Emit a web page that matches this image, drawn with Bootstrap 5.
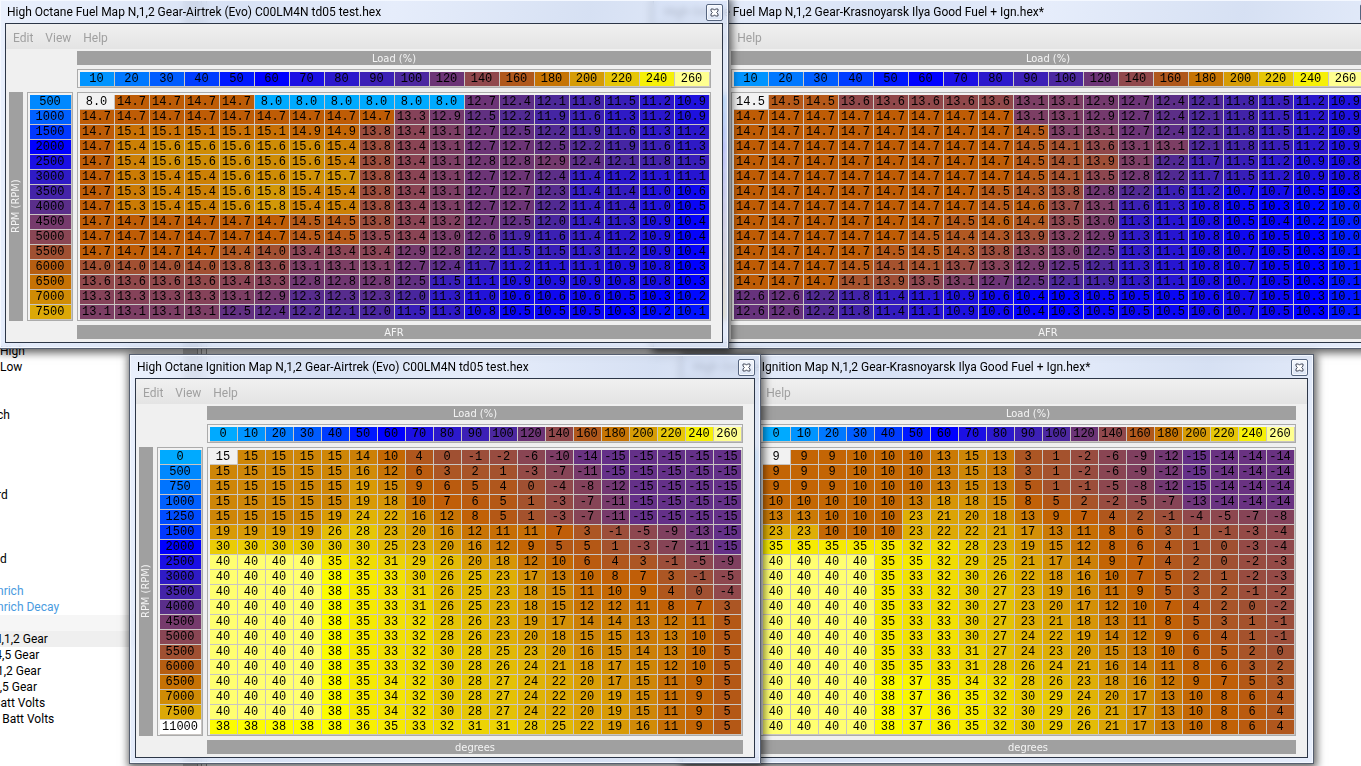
<!DOCTYPE html>
<html lang="en">
<head>
<meta charset="utf-8">
<meta name="viewport" content="width=device-width, initial-scale=1">
<title>Map editor</title>
<link href="https://cdn.jsdelivr.net/npm/bootstrap@5.3.0/dist/css/bootstrap.min.css" rel="stylesheet">
<style>
body { font: 12px/16px Roboto, "Open Sans", sans-serif; color: #000; background: #fff; }
.tree { width: 183px; padding-top: 343px; background: #fff; }
.tree li { height: 16px; white-space: nowrap; }
.tree a { color: #000; text-decoration: none; }
.tree .blue a { color: #4a9be0; }
.tree .clip a { margin-left: -3px; }
.tree .deep a { margin-left: -7px; }
.tree .group { background: #f6f6f6; }
.tree .active { background: #efefef; }
.splitter { width: 24px; background: #f0f0f0; border-left: 14px solid #c8c8c8; border-right: 1px solid #999; box-shadow: inset 1px 0 #999, inset 4px 0 #e4e4e4, inset 5px 0 #999; }

/* floating tool windows */
.win { position: absolute; width: max-content; border: 1px solid #565f70; padding: 0 5px 5px; background: linear-gradient(100deg, #e4ecfcc8, #cddaf2c8 30%, #dfe8fac8 50%, #cbd8f0c8 75%, #e0e9fbc8); backdrop-filter: blur(3px); box-shadow: inset 0 0 0 1px #f4f8ff, 1px 2px 8px 2px #0009; }
.fuel-a { left: -1px; top: -1px; z-index: 2; }
.fuel-b { left: 653px; top: -1px; z-index: 1; }
.ign-a { left: 129px; top: 354px; z-index: 2; }
.ign-b { left: 682px; top: 354px; z-index: 1; }
.caption-bar { height: 23px; padding-left: 2px; }
.fuel-b .caption-bar, .ign-b .caption-bar { padding-left: 5px; }
.caption-bar h2 { font-size: 12px; line-height: 24px; margin: 0; font-weight: 400; white-space: nowrap; }
.btn-x { width: 17px; height: 17px; border: 1px solid #56657f; border-radius: 2px; background: linear-gradient(#f4f7fd, #dce5f5); box-shadow: inset 0 0 0 1px #fffa; margin-top: 4px; }
.client { border: 1px solid #2c3647; background: #f0f0f0; }
.menubar { height: 25px; padding: 2px 7px 0; gap: 12px; background: linear-gradient(#f0f0f0, #e4e4e4); }
.menubar button { color: #a0a0a0; padding: 0; border: 0; background: none; }
.pane { display: grid; grid-template-columns: 14px auto auto; gap: 4px; padding: 2px 11px 3px 3px; }
.strip { background: #a0a0a0; color: #f4f4f4; font: 11px/15px "DejaVu Sans Condensed", "DejaVu Sans", sans-serif; text-align: center; grid-column: 3; height: 14px; }
.strip.side { writing-mode: vertical-rl; transform: rotate(180deg); grid-column: 1; height: auto; line-height: 14px; }
.box { border: 1px solid #ababab; padding: 2px 0 0 2px; background: #f2f2f2; }
.box.top-axis { grid-column: 3; }
.box table { border-collapse: separate; border-spacing: 0; table-layout: fixed; font: 12px/14px "Liberation Mono", monospace; color: #000; text-align: center; }
.box td, .box th { height: 15px; padding: 0 1px 0 0; border: solid #c9c5c2; border-width: 0 1px 1px 0; font-weight: 400; white-space: nowrap; }
.w35 td, .w35 th { width: 35px; }
.w28 td, .w28 th { width: 28px; }
.w42 th { width: 42px; }
</style>
</head>
<body>
<main class="position-relative vh-100 overflow-hidden d-flex">
  <nav class="d-flex" aria-label="Tables">
    <ul class="tree list-unstyled mb-0">
      <li><a href="#">High</a></li>
      <li><a href="#">Low</a></li>
      <li></li><li></li>
      <li class="clip"><a href="#">ch</a></li>
      <li></li><li></li><li></li><li></li>
      <li class="clip"><a href="#">rd</a></li>
      <li></li><li></li><li></li>
      <li><a href="#">d</a></li>
      <li></li>
      <li class="blue clip"><a href="#">nrich</a></li>
      <li class="blue clip"><a href="#">nrich Decay</a></li>
      <li class="group"></li>
      <li class="active deep"><a href="#">N,1,2 Gear</a></li>
      <li class="deep"><a href="#">,4,5 Gear</a></li>
      <li class="clip"><a href="#">1,2 Gear</a></li>
      <li class="deep"><a href="#">4,5 Gear</a></li>
      <li class="deep"><a href="#">Batt Volts</a></li>
      <li class="deep"><a href="#">s Batt Volts</a></li>
    </ul>
    <div class="splitter"></div>
  </nav>
  <section class="win fuel-b" data-map="fuelB"></section>
  <section class="win fuel-a" data-map="fuelA"></section>
  <section class="win ign-b" data-map="ignB"></section>
  <section class="win ign-a" data-map="ignA"></section>
</main>
<script src="https://cdn.jsdelivr.net/npm/bootstrap@5.3.0/dist/js/bootstrap.bundle.min.js"></script>
<script>
// colour ramps: value, colour
const ramps = {
  load: [[0,'00aaff'],[10,'0094ff'],[20,'0078ff'],[30,'005cff'],[40,'003cff'],[50,'0018ff'],[60,'0000ff'],[70,'1c10e4'],[80,'2c19cc'],[90,'3c20b6'],[100,'4c28a0'],[120,'6c3476'],[140,'90484c'],[160,'b0581c'],[180,'c67404'],[200,'d69c06'],[220,'e6c608'],[240,'f6f008'],[260,'ffff90']],
  rpm: [[0,'00aaff'],[500,'0088ff'],[1000,'0060ff'],[1500,'0038ff'],[2000,'0000ff'],[2500,'1a0fe4'],[3000,'2f1bc6'],[3500,'4424a8'],[4000,'5a2e8a'],[4500,'763a6c'],[5000,'8a4654'],[5500,'a05032'],[6000,'b65e12'],[6500,'c67204'],[7000,'d08c06'],[7500,'dca808'],[11000,'ffffff']],
  afr: [[8,'00aaff'],[10,'001cff'],[10.3,'0000ff'],[10.9,'1e11de'],[11.5,'381eb8'],[12.1,'4c2898'],[12.7,'6c3476'],[13.1,'7c3e64'],[13.4,'8a4454'],[13.6,'90484a'],[13.8,'9a4c3c'],[14,'a25032'],[14.4,'b05822'],[14.7,'be5c06'],[15.1,'c87004'],[15.4,'cc8006'],[15.6,'ce8c06'],[15.8,'d29808']],
  ign: [[-15,'643088'],[-10,'7c3c64'],[-7,'864456'],[-4,'90484c'],[-1,'9c4e3a'],[0,'a05032'],[3,'ac5624'],[5,'b45816'],[7,'c05e08'],[10,'c46804'],[13,'ca7a06'],[15,'ce8608'],[19,'d89a06'],[23,'deae06'],[28,'e6c606'],[30,'eacc06'],[32,'f0dc04'],[35,'f6ea02'],[38,'fcfc00'],[40,'ffff70']]
};
function shade(ramp, v) {
  let i = 1;
  while (i < ramp.length - 1 && v > ramp[i][0]) i++;
  const [a, ca] = ramp[i - 1], [b, cb] = ramp[i];
  const t = Math.min(1, Math.max(0, (v - a) / (b - a)));
  const p = k => {
    const x = parseInt(ca.substr(k, 2), 16), y = parseInt(cb.substr(k, 2), 16);
    return Math.round(x + (y - x) * t);
  };
  return `rgb(${p(0)},${p(2)},${p(4)})`;
}

const load18 = '10 20 30 40 50 60 70 80 90 100 120 140 160 180 200 220 240 260';
const fuelRpm = '500 1000 1500 2000 2500 3000 3500 4000 4500 5000 5500 6000 6500 7000 7500';
const ignRpm = '0 500 750 1000 1250 1500 2000 2500 3000 3500 4000 4500 5000 5500 6000 6500 7000 7500 11000';
const maps = {
fuelA: { title: 'High Octane Fuel Map N,1,2 Gear-Airtrek (Evo) C00LM4N td05 test.hex', unit: 'AFR', ramp: 'afr', cols: load18, rows: fuelRpm, cell: 'w35', data: `
8.0 14.7 14.7 14.7 14.7 8.0 8.0 8.0 8.0 8.0 8.0 12.7 12.4 12.1 11.8 11.5 11.2 10.9
14.7 14.7 14.7 14.7 14.7 14.7 14.7 14.7 14.7 13.3 12.9 12.5 12.2 11.9 11.6 11.3 11.2 10.9
14.7 15.1 15.1 15.1 15.1 15.1 14.9 14.9 13.8 13.4 13.1 12.7 12.5 12.2 11.9 11.6 11.3 11.2
14.7 15.4 15.6 15.6 15.6 15.6 15.6 15.4 13.8 13.4 13.1 12.7 12.7 12.5 12.2 11.9 11.6 11.3
14.7 15.4 15.6 15.6 15.6 15.6 15.6 15.4 13.8 13.4 13.1 12.8 12.8 12.9 12.4 12.1 11.8 11.5
14.7 15.3 15.4 15.4 15.6 15.6 15.7 15.7 13.8 13.4 13.1 12.7 12.7 12.4 11.4 11.2 11.1 11.1
14.7 15.3 15.4 15.4 15.6 15.8 15.4 15.4 13.8 13.4 13.1 12.7 12.7 12.3 11.4 11.4 11.0 10.6
14.7 15.3 15.4 15.4 15.6 15.8 15.4 15.4 13.8 13.4 13.1 12.7 12.7 12.2 11.4 11.4 11.0 10.5
14.7 14.7 14.7 14.7 14.7 14.7 14.5 14.5 13.8 13.4 13.2 12.7 12.5 12.0 11.4 11.3 10.9 10.4
14.7 14.7 14.7 14.7 14.7 14.7 14.5 14.5 13.5 13.4 13.0 12.6 11.9 11.6 11.4 11.2 10.9 10.4
14.7 14.7 14.7 14.7 14.4 14.0 13.4 13.4 13.4 12.9 12.8 12.2 11.5 11.5 11.3 11.2 10.9 10.4
14.0 14.0 14.0 14.0 13.8 13.6 13.1 13.1 13.1 12.7 12.4 11.7 11.2 11.1 11.1 10.9 10.8 10.3
13.6 13.6 13.6 13.6 13.4 13.3 12.8 12.8 12.8 12.5 11.5 11.1 10.9 10.9 10.9 10.8 10.8 10.3
13.3 13.3 13.3 13.3 13.1 12.9 12.3 12.3 12.3 12.0 11.3 11.0 10.6 10.6 10.6 10.5 10.3 10.2
13.1 13.1 13.1 13.1 12.5 12.4 12.2 12.1 12.0 11.5 11.3 10.8 10.5 10.5 10.5 10.3 10.2 10.1` },
fuelB: { title: 'High Octane Fuel Map N,1,2 Gear-Krasnoyarsk Ilya Good Fuel + Ign.hex*', unit: 'AFR', ramp: 'afr', cols: load18, rows: fuelRpm, cell: 'w35', data: `
14.5 14.5 14.5 13.6 13.6 13.6 13.6 13.6 13.1 13.1 12.9 12.7 12.4 12.1 11.8 11.5 11.2 10.9
14.7 14.7 14.7 14.7 14.7 14.7 14.7 14.7 13.1 13.1 12.9 12.7 12.4 12.1 11.8 11.5 11.2 10.9
14.7 14.7 14.7 14.7 14.7 14.7 14.7 14.7 14.5 13.1 13.1 12.7 12.4 12.1 11.8 11.5 11.2 10.9
14.7 14.7 14.7 14.7 14.7 14.7 14.7 14.7 14.5 14.1 13.6 13.1 13.1 12.1 11.8 11.5 11.2 10.9
14.7 14.7 14.7 14.7 14.7 14.7 14.7 14.7 14.5 14.1 13.9 13.1 12.2 11.7 11.5 11.2 10.9 10.8
14.7 14.7 14.7 14.7 14.7 14.7 14.7 14.7 14.5 14.1 13.5 12.8 12.2 11.7 11.5 11.2 10.9 10.8
14.7 14.7 14.7 14.7 14.7 14.7 14.7 14.5 14.3 13.8 12.8 12.2 11.6 11.2 10.7 10.7 10.5 10.3
14.7 14.7 14.7 14.7 14.7 14.7 14.7 14.5 14.6 13.7 13.1 11.6 11.3 10.8 10.5 10.3 10.2 10.0
14.7 14.7 14.7 14.7 14.7 14.7 14.5 14.6 14.4 13.5 13.0 11.3 11.1 10.8 10.5 10.4 10.2 10.0
14.7 14.7 14.7 14.7 14.7 14.5 14.4 14.3 13.9 13.2 12.9 11.3 11.1 10.8 10.6 10.5 10.3 10.0
14.7 14.7 14.7 14.7 14.5 14.5 14.3 13.8 13.3 13.0 12.5 11.3 11.1 10.8 10.7 10.5 10.3 10.1
14.7 14.7 14.7 14.5 14.1 14.1 13.7 13.3 12.9 12.5 12.1 11.3 11.1 10.8 10.7 10.5 10.3 10.1
14.7 14.7 14.7 14.1 13.9 13.5 13.1 12.7 12.5 12.1 11.9 11.3 11.1 10.8 10.7 10.5 10.3 10.1
12.6 12.6 12.2 11.8 11.4 11.1 10.9 10.6 10.4 10.3 10.5 10.5 10.5 10.6 10.7 10.5 10.3 10.1
12.6 12.6 12.2 11.8 11.4 11.1 10.9 10.6 10.4 10.3 10.5 10.5 10.5 10.6 10.7 10.5 10.3 10.1` },
ignA: { title: 'High Octane Ignition Map N,1,2 Gear-Airtrek (Evo) C00LM4N td05 test.hex', unit: 'degrees', ramp: 'ign', cols: '0 ' + load18, rows: ignRpm, cell: 'w28', data: `
15 15 15 15 15 14 10 4 0 -1 -2 -6 -10 -14 -15 -15 -15 -15 -15
15 15 15 15 15 16 12 6 3 2 1 -3 -7 -11 -15 -15 -15 -15 -15
15 15 15 15 15 19 15 9 6 5 4 0 -4 -8 -12 -15 -15 -15 -15
15 15 15 15 15 19 18 10 7 6 5 1 -3 -7 -11 -15 -15 -15 -15
15 15 15 15 19 24 22 16 12 8 5 1 -3 -7 -11 -15 -15 -15 -15
19 19 19 19 26 28 23 20 16 12 11 11 7 3 -1 -5 -9 -13 -15
30 30 30 30 30 30 25 23 20 16 12 9 5 5 1 -3 -7 -11 -15
40 40 40 40 35 32 31 29 26 20 18 12 10 6 4 3 -1 -5 -9
40 40 40 40 38 35 33 30 26 25 23 17 13 10 8 7 3 -1 -5
40 40 40 40 38 35 33 31 26 25 23 18 15 11 10 9 4 0 -4
40 40 40 40 38 35 33 31 26 25 23 18 15 12 12 11 8 7 3
40 40 40 40 38 35 33 32 28 26 23 19 17 14 14 13 12 11 5
40 40 40 40 38 35 33 32 28 26 23 20 18 15 15 13 13 10 5
40 40 40 40 38 35 33 32 30 28 25 23 20 16 15 14 13 10 5
40 40 40 40 38 35 33 32 30 28 26 24 21 18 17 15 12 10 5
40 40 40 40 38 35 34 32 30 28 27 24 22 20 17 15 11 9 5
40 40 40 40 38 35 34 32 30 28 27 24 22 20 19 15 11 9 5
40 40 40 40 38 35 34 32 30 28 27 24 22 20 19 15 11 9 5
38 38 38 38 38 36 35 33 32 31 31 28 25 22 19 16 11 9 5` },
ignB: { title: 'High Octane Ignition Map N,1,2 Gear-Krasnoyarsk Ilya Good Fuel + Ign.hex*', unit: 'degrees', ramp: 'ign', cols: '0 ' + load18, rows: ignRpm, cell: 'w28', data: `
9 9 9 10 10 10 13 15 13 3 1 -2 -6 -9 -12 -15 -14 -14 -14
9 9 9 10 10 10 13 15 13 3 1 -2 -6 -9 -12 -15 -14 -14 -14
9 9 9 10 10 10 13 15 13 5 1 -1 -5 -8 -12 -15 -14 -14 -14
10 10 10 10 10 13 18 18 15 8 5 2 -2 -5 -7 -13 -14 -14 -14
13 13 10 10 10 23 21 20 18 13 9 7 4 2 -1 -4 -5 -7 -8
23 23 10 10 10 23 22 22 21 17 13 11 8 6 3 1 -1 -3 -4
35 35 35 35 35 32 32 28 23 19 15 12 8 6 4 1 0 -3 -4
40 40 40 40 35 35 32 29 25 21 17 14 9 7 4 2 0 -2 -3
40 40 40 40 35 33 32 30 26 22 18 16 10 7 5 2 1 -2 -3
40 40 40 40 35 33 32 30 27 23 19 16 11 9 5 3 2 -1 -2
40 40 40 40 35 33 32 30 27 23 20 17 12 10 7 4 2 0 -2
40 40 40 40 35 33 33 30 27 23 21 18 13 11 8 5 3 1 -1
40 40 40 40 35 33 33 30 27 24 22 19 14 12 9 6 4 1 -1
40 40 40 40 35 33 33 31 27 24 23 20 15 13 10 6 5 2 0
40 40 40 40 35 35 33 31 28 26 24 21 16 14 11 8 6 3 2
40 40 40 40 38 37 35 34 32 28 26 23 18 16 12 9 7 5 3
40 40 40 40 38 37 36 35 32 30 29 24 20 17 13 10 8 6 4
40 40 40 40 38 37 36 35 32 30 29 26 21 17 13 10 8 6 4
40 40 40 40 38 37 36 35 32 30 29 26 21 17 13 10 8 6 4` }
};
const cell = (tag, ramp, v) => `<${tag} style="background-color:${shade(ramps[ramp], +v)}">${v}</${tag}>`;

document.querySelectorAll('.win').forEach(win => {
  const m = maps[win.dataset.map];
  const cols = m.cols.split(' ').map(v => cell('th', 'load', v)).join('');
  const rows = m.rows.split(' ').map(v => `<tr>${cell('th', 'rpm', v)}</tr>`).join('');
  const body = m.data.trim().split('\n').map((line, r) => '<tr>' + line.split(' ').map((v, c) =>
    r + c ? cell('td', m.ramp, v) : `<td>${v}</td>`).join('') + '</tr>').join('');
  win.innerHTML = `
    <header class="caption-bar d-flex justify-content-between">
      <h2>${m.title}</h2>
      <button class="btn-x d-flex align-items-center justify-content-center p-0" type="button" aria-label="Close">
        <svg width="9" height="9" viewBox="0 0 9 9"><path d="M1 1h2.5l1 1.2L5.500 1H8v2L6.700 4.500 8 6v2H5.500l-1-1.200L3.500 8H1V6l1.300-1.500L1 3z" fill="#fff" stroke="#454b5c"/></svg>
      </button>
    </header>
    <div class="client">
      <div class="menubar d-flex align-items-center"><button type="button">Edit</button><button type="button">View</button><button type="button">Help</button></div>
      <div class="pane">
        <div class="strip">Load (%)</div>
        <div class="box top-axis ${m.cell}"><table><tr>${cols}</tr></table></div>
        <div class="strip side">RPM (RPM)</div>
        <div class="box w42"><table>${rows}</table></div>
        <div class="box ${m.cell}"><table>${body}</table></div>
        <div class="strip">${m.unit}</div>
      </div>
    </div>`;
});
</script>
</body>
</html>
